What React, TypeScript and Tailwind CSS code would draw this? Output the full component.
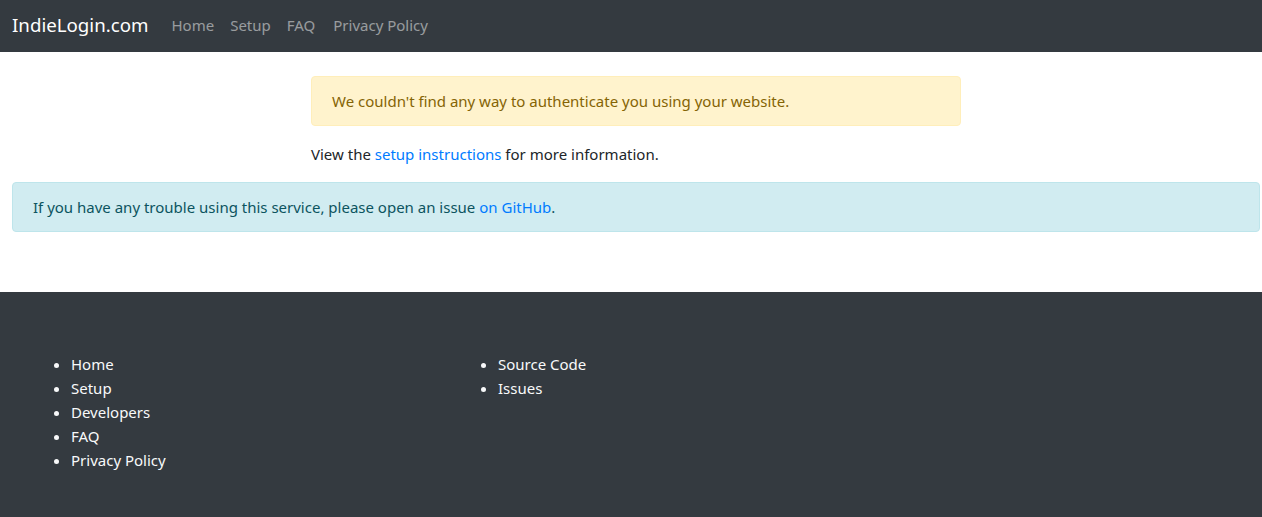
export default function App() {
  const font = { fontFamily: '"Noto Sans", "Open Sans", sans-serif' };
  return (
    <div className="min-h-[517px] bg-white text-[15px] leading-[24px] text-[#212529]" style={font}>
      <nav className="flex h-[52px] items-center bg-[#343a40] pb-[3px] pl-[12px]">
        <span className="mr-[23px] text-[18.7px] leading-[30px] text-white">IndieLogin.com</span>
        <div className="flex gap-[16px] text-[rgba(255,255,255,0.5)]">
          <a>Home</a>
          <a>Setup</a>
          <a className="mr-[2px]">FAQ</a>
          <a>Privacy Policy</a>
        </div>
      </nav>
      <main className="pl-[12px] pr-[2px] pt-[24px] pb-[60px]">
        <div className="ml-[299px] w-[650px]">
          <div className="rounded-[4px] border border-[#ffeeba] bg-[#fff3cd] px-[20px] py-[12px] text-[#856404]">
            We couldn't find any way to authenticate you using your website.
          </div>
          <p className="mt-[16px] mb-[16px]">
            View the <a className="text-[#007bff]">setup instructions</a> for more information.
          </p>
        </div>
        <div className="rounded-[4px] border border-[#bee5eb] bg-[#d1ecf1] px-[20px] py-[12px] text-[#0c5460]">
          If you have any trouble using this service, please open an issue <a className="text-[#007bff]">on GitHub</a>.
        </div>
      </main>
      <footer className="grid h-[225px] grid-cols-[427px_1fr] bg-[#343a40] pl-[31px] pt-[60px] text-[#f8f9fa]">
        <ul className="list-disc pl-[40px]">
          <li>Home</li>
          <li>Setup</li>
          <li>Developers</li>
          <li>FAQ</li>
          <li>Privacy Policy</li>
        </ul>
        <ul className="list-disc pl-[40px]">
          <li>Source Code</li>
          <li>Issues</li>
        </ul>
      </footer>
    </div>
  );
}
